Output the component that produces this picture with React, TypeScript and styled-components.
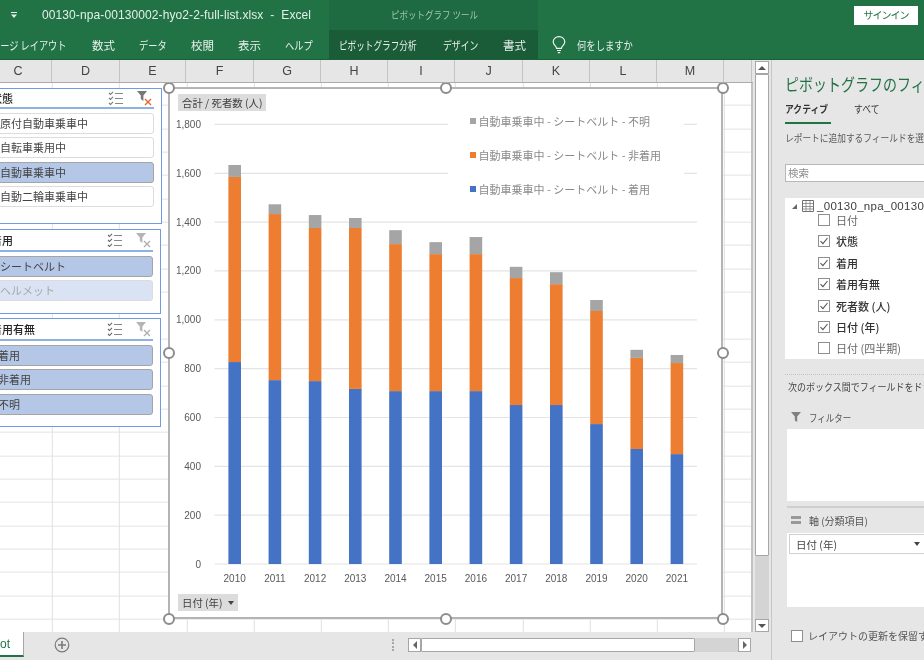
import styled, { createGlobalStyle } from "styled-components";
import { Fragment } from "react";

const GlobalStyle = createGlobalStyle`
  html, body {
    margin: 0;
    padding: 0;
    background: #e6e6e6;
  }
  * {
    box-sizing: border-box;
  }
`;

const FONT = `"Noto Sans CJK JP", "Liberation Sans", sans-serif`;

const Frame = styled.div`
  width: 924px;
  height: 660px;
  overflow: hidden;
  display: flex;
  flex-direction: column;
  font-family: ${FONT};
  background: #e6e6e6;
  filter: blur(0.5px);
`;

// the original UI font is narrow, so the wide CJK glyphs get squeezed
const Squeezed = styled.div<{ $x?: number }>`
  transform: scaleX(${(p) => p.$x ?? 0.77});
  transform-origin: left center;
  white-space: nowrap;
`;

// ---- title bar and ribbon tabs

const TitleBar = styled.div`
  height: 30px;
  flex: none;
  display: flex;
  align-items: center;
  background: #217346;
  color: #e4efe8;
`;

const QuickAccess = styled.div`
  width: 42px;
  padding-left: 10px;
  display: flex;
`;

const FileName = styled.div`
  width: 287px;
  font-family: "Liberation Sans", sans-serif;
  font-size: 12px;
  white-space: pre;
  letter-spacing: 0.1px;
`;

const ContextTitle = styled.div`
  width: 209px;
  height: 100%;
  padding-left: 62px;
  line-height: 30px;
  font-size: 10px;
  color: #a3c4b0;
  background: #1e6b41;
`;

const SignIn = styled.div`
  margin-left: auto;
  margin-right: 6px;
  width: 64px;
  height: 19px;
  line-height: 18px;
  text-align: center;
  font-size: 10px;
  letter-spacing: -1px;
  background: #fff;
  color: #217346;
`;

const RibbonBar = styled.div`
  height: 30px;
  flex: none;
  display: flex;
  align-items: center;
  background: #217346;
  color: #e8f1eb;
  font-size: 11.5px;
  border-bottom: 1px solid #1a6038;
`;

const ContextGroup = styled.div`
  width: 209px;
  height: 100%;
  display: flex;
  align-items: center;
  background: #1b5c38;
`;

const Tab = styled.div<{ $width: number; $pad?: number; $lead?: number }>`
  width: ${(p) => p.$width}px;
  flex: none;
  margin-left: ${(p) => p.$lead ?? 0}px;
  padding-left: ${(p) => p.$pad ?? 0}px;
  white-space: nowrap;
`;

const TellMe = styled.div`
  display: flex;
  align-items: center;
  gap: 11px;
  margin-left: 14px;
`;

// ---- work area

const Main = styled.div`
  flex: 1;
  min-height: 0;
  display: flex;
`;

const Book = styled.div`
  width: 772px;
  flex: none;
  display: flex;
  flex-direction: column;
  border-right: 1px solid #c6c6c6;
`;

const BookTop = styled.div`
  flex: 1;
  min-height: 0;
  display: flex;
`;

const SheetColumn = styled.div`
  width: 753px;
  flex: none;
  display: flex;
  flex-direction: column;
`;

const ColumnHeader = styled.div`
  height: 23px;
  flex: none;
  display: flex;
  margin-left: -15px;
  background: #e6e6e6;
  border-bottom: 1px solid #ababab;
`;

const ColumnCell = styled.div<{ $width: number }>`
  width: ${(p) => p.$width}px;
  flex: none;
  text-align: center;
  line-height: 22px;
  font-family: "Liberation Sans", sans-serif;
  font-size: 12.5px;
  color: #444;
  border-right: 1px solid #c4c4c4;
`;

const Sheet = styled.div`
  position: relative;
  flex: 1;
  overflow: hidden;
  border-right: 2px solid #c2c2c2;
  background-color: #fff;
  background-image: repeating-linear-gradient(
      to right,
      transparent 0,
      transparent 66.2px,
      #e0e0e0 66.2px,
      #e0e0e0 67.2px
    ),
    repeating-linear-gradient(
      to bottom,
      transparent 0,
      transparent 22.35px,
      #e3e3e3 22.35px,
      #e3e3e3 23.35px
    );
  background-position: -14.2px 0, 0 -0.35px;
`;

// ---- slicers

const SlicerBox = styled.div<{ $top: number; $height: number; $right: number }>`
  position: absolute;
  left: -14px;
  top: ${(p) => p.$top}px;
  width: ${(p) => p.$right + 14}px;
  height: ${(p) => p.$height}px;
  background: #fff;
  border: 1px solid #6f9be0;
  padding: 0 7px 0 4px;
`;

const SlicerHead = styled.div<{ $height: number }>`
  height: ${(p) => p.$height}px;
  margin-bottom: 4px;
  display: flex;
  align-items: center;
  border-bottom: 2px solid #8fb0e3;
  font-size: 11px;
  font-weight: 500;
  color: #262626;
`;

const SlicerTitle = styled.div`
  flex: 1;
`;

const SlicerIcons = styled.div`
  display: flex;
  align-items: center;
  gap: 13px;
  margin-right: 1px;
`;

const SlicerItem = styled.div<{ $state: "on" | "off" | "muted"; $pad: number }>`
  height: 21px;
  margin-bottom: 3.4px;
  padding-left: ${(p) => p.$pad}px;
  line-height: 19px;
  font-size: 11px;
  white-space: nowrap;
  border-radius: 3px;
  color: ${(p) => (p.$state === "muted" ? "#a8a8a8" : "#444")};
  border: 1px solid ${(p) => (p.$state === "on" ? "#a5a5a5" : "#dcdcdc")};
  background: ${(p) =>
    p.$state === "on" ? "#b4c7e7" : p.$state === "muted" ? "#dae3f3" : "#fff"};
`;

// ---- chart

const ChartBox = styled.div`
  position: absolute;
  left: 168px;
  top: 4px;
  width: 555px;
  height: 532px;
  background: #fff;
  border: 2px solid #b4b4b4;
`;

const ChartSvg = styled.svg`
  display: block;
  position: absolute;
  left: -2px;
  top: -2px;
`;

const AxisText = styled.text`
  font-family: "Liberation Sans", sans-serif;
  font-size: 10px;
  fill: #595959;
`;

const FieldButton = styled.div<{ $left: number; $top: number }>`
  position: absolute;
  left: ${(p) => p.$left}px;
  top: ${(p) => p.$top}px;
  height: 17px;
  padding: 0 4px;
  display: flex;
  align-items: center;
  gap: 5px;
  line-height: 17px;
  font-size: 10.4px;
  color: #404040;
  white-space: nowrap;
  background: #dcdcdc;
`;

const DownCaret = styled.span`
  width: 0;
  height: 0;
  border-left: 3.5px solid transparent;
  border-right: 3.5px solid transparent;
  border-top: 4px solid #444;
`;

const Legend = styled.div`
  position: absolute;
  left: 278px;
  top: 5px;
  width: 236px;
  height: 112px;
  padding: 17px 0 0 22px;
  display: flex;
  flex-direction: column;
  gap: 14.6px;
  background: #fff;
`;

const LegendRow = styled.div`
  display: flex;
  align-items: center;
  gap: 3px;
  height: 19.4px;
  font-size: 11px;
  color: #8a8a8a;
  white-space: nowrap;
`;

const LegendSwatch = styled.span<{ $color: string }>`
  width: 5.5px;
  height: 6px;
  background: ${(p) => p.$color};
`;

const Handle = styled.span<{ $x: number; $y: number }>`
  position: absolute;
  left: ${(p) => p.$x - 7}px;
  top: ${(p) => p.$y - 7}px;
  width: 12px;
  height: 12px;
  border-radius: 50%;
  background: #fff;
  border: 2px solid #8c8c8c;
`;

// ---- scrollbars

const VScroll = styled.div`
  width: 14px;
  margin-left: 2px;
  flex: none;
  display: flex;
  flex-direction: column;
  padding-top: 1px;
`;

const ScrollButton = styled.div<{ $h?: number; $w?: number }>`
  flex: none;
  height: ${(p) => (p.$h ? `${p.$h}px` : "100%")};
  width: ${(p) => (p.$w ? `${p.$w}px` : "100%")};
  display: flex;
  align-items: center;
  justify-content: center;
  background: #fff;
  border: 1px solid #a6a6a6;
`;

const ScrollThumb = styled.div<{ $h?: number; $w?: number }>`
  flex: none;
  height: ${(p) => (p.$h ? `${p.$h}px` : "100%")};
  width: ${(p) => (p.$w ? `${p.$w}px` : "100%")};
  background: #fff;
  border: 1px solid #a6a6a6;
  border-radius: 1px;
`;

const ScrollTrack = styled.div`
  flex: 1;
  background: #d4d4d4;
`;

const Arrow = styled.span<{ $dir: "up" | "down" | "left" | "right" }>`
  width: 0;
  height: 0;
  border-style: solid;
  border-color: transparent;
  ${(p) =>
    p.$dir === "up"
      ? "border-width: 0 4px 4px; border-bottom-color: #555;"
      : p.$dir === "down"
        ? "border-width: 4px 4px 0; border-top-color: #555;"
        : p.$dir === "left"
          ? "border-width: 4px 4px 4px 0; border-right-color: #666;"
          : "border-width: 4px 0 4px 4px; border-left-color: #666;"}
`;

// ---- sheet tabs

const SheetTabs = styled.div`
  height: 25px;
  margin-bottom: 3px;
  flex: none;
  display: flex;
  align-items: center;
  background: #e6e6e6;
`;

const ActiveSheet = styled.div`
  width: 24px;
  height: 100%;
  text-align: right;
  padding-right: 13px;
  line-height: 24px;
  font-family: "Liberation Sans", sans-serif;
  font-size: 12px;
  color: #217346;
  background: #fff;
  border-right: 1px solid #a6a6a6;
  border-bottom: 2px solid #217346;
`;

const AddSheet = styled.div`
  margin-left: 30px;
  width: 16px;
  height: 16px;
  display: flex;
`;

const TabDots = styled.div`
  margin-left: 322px;
  width: 3px;
  height: 12px;
  border-left: 2px dotted #a6a6a6;
`;

const HScroll = styled.div`
  margin-left: 13px;
  width: 343px;
  height: 14px;
  display: flex;
`;

// ---- field pane

const Pane = styled.div`
  flex: 1;
  min-width: 0;
  padding: 11px 0 0 13px;
  overflow: hidden;
  display: flex;
  flex-direction: column;
  white-space: nowrap;
`;

const PaneTitle = styled.div`
  height: 26px;
  line-height: 26px;
  font-size: 17.5px;
  color: #217346;
`;

const PaneTabs = styled.div`
  margin-top: 3px;
  height: 24px;
  display: flex;
  font-size: 10px;
  color: #333;
`;

const PaneTab = styled.div<{ $active?: boolean }>`
  width: ${(p) => (p.$active ? "46px" : "auto")};
  margin-right: ${(p) => (p.$active ? 23 : 0)}px;
  font-weight: ${(p) => (p.$active ? 700 : 400)};
  line-height: 18px;
  border-bottom: ${(p) => (p.$active ? "2px solid #217346" : "none")};
`;

const PaneNote = styled.div`
  margin-top: 6px;
  height: 16px;
  line-height: 16px;
  font-size: 10px;
  color: #595959;
`;

const SearchBox = styled.div`
  margin-top: 18px;
  height: 18px;
  padding-left: 2px;
  width: 200px;
  line-height: 15px;
  font-size: 10.5px;
  color: #8c8c8c;
  background: #fff;
  border: 1px solid #b8b8b8;
`;

const FieldList = styled.div`
  margin-top: 16px;
  width: 200px;
  height: 161px;
  padding: 1px 0 0 7px;
  background: #fff;
`;

const TableRow = styled.div`
  height: 14px;
  margin-bottom: -3.7px;
  display: flex;
  align-items: center;
  gap: 3px;
  font-family: "Liberation Sans", sans-serif;
  font-size: 11.5px;
  font-weight: 500;
  color: #404040;
  letter-spacing: 0.3px;
`;

const TreeCaret = styled.span`
  width: 0;
  height: 0;
  margin-right: 2px;
  border-left: 5px solid transparent;
  border-bottom: 5px solid #666;
`;

const FieldRow = styled.div<{ $on?: boolean }>`
  height: 21.4px;
  padding-left: 26px;
  display: flex;
  align-items: center;
  gap: 6px;
  font-size: 11px;
  font-weight: ${(p) => (p.$on ? 500 : 400)};
  color: ${(p) => (p.$on ? "#333" : "#666")};
`;

const CheckBox = styled.span`
  width: 12px;
  height: 12px;
  flex: none;
  display: flex;
  background: #fff;
  border: 1px solid #8f8f8f;
`;

const DottedRule = styled.div`
  margin-top: 15px;
  border-top: 1px dotted #c4c4c4;
`;

const DropNote = styled.div`
  margin: 4px 0 0 3px;
  height: 16px;
  line-height: 16px;
  font-size: 10px;
  color: #444;
`;

const AreaLabel = styled.div<{ $gap: number }>`
  margin: ${(p) => p.$gap}px 0 0 6px;
  height: 16px;
  display: flex;
  align-items: center;
  gap: 8px;
  font-size: 10px;
  color: #555;
`;

const AreaBox = styled.div<{ $height: number; $gap: number }>`
  margin: ${(p) => p.$gap}px 0 0 2px;
  width: 200px;
  height: ${(p) => p.$height}px;
  padding-top: 1px;
  background: #fff;
`;

const AreaField = styled.div`
  margin-left: 2px;
  height: 20px;
  padding-left: 6px;
  display: flex;
  align-items: center;
  width: 135px;
  justify-content: space-between;
  padding-right: 4px;
  font-size: 10.5px;
  color: #444;
  background: #fff;
  border: 1px solid #d0d0d0;
  border-right: none;
`;

const DeferRow = styled.div`
  margin: 21px 0 0 6px;
  display: flex;
  align-items: center;
  gap: 5px;
  font-size: 10px;
  color: #555;
`;

const AreaRule = styled.div`
  margin: 5px 0 0 2px;
  border-top: 2px solid #cfcfcf;
`;

// ---- icons

const MultiSelectIcon = ({ muted }: { muted?: boolean }) => (
  <svg width="16" height="14" viewBox="0 0 16 14" fill="none">
    <path
      d="M1 2l1.5 1.5L5 .8M1 7l1.5 1.5L5 5.8M1 12l1.5 1.5L5 10.8"
      stroke={muted ? "#666" : "#777"}
      strokeWidth="1.1"
    />
    <path d="M7 2.5h8M7 7.5h8M7 12.5h8" stroke="#888" strokeWidth="1.2" />
  </svg>
);

const ClearFilterIcon = ({ active }: { active?: boolean }) => (
  <svg width="16" height="15" viewBox="0 0 16 15" fill="none">
    <path d="M0 0h10L6.4 4.4V10L3.8 8V4.4z" fill={active ? "#777" : "#b5b5b5"} />
    <path
      d="M8 8l6 6M14 8l-6 6"
      stroke={active ? "#e2672a" : "#b0b0b0"}
      strokeWidth="1.4"
    />
  </svg>
);

const LightBulb = () => (
  <svg width="14" height="18" viewBox="0 0 14 18" fill="none" stroke="#f0f5f1" strokeWidth="1.2">
    <path d="M4.6 12.4C4.4 10 1.2 9 1.2 5.8a5.8 5.2 0 0 1 11.6 0c0 3.2-3.2 4.2-3.4 6.6z" />
    <path d="M5 14.5h4M5.8 16.6h2.4" />
  </svg>
);

const TableIcon = () => (
  <svg width="12" height="12" viewBox="0 0 12 12" fill="none" stroke="#707070" strokeWidth="1">
    <path d="M.5.5h11v11H.5z" />
    <path d="M.5 3.5h11M.5 6.5h11M.5 9h11M4 .5v11M8 .5v11" strokeWidth=".7" />
  </svg>
);

const Tick = () => (
  <svg width="10" height="10" viewBox="0 0 10 10" fill="none">
    <path d="M1.5 5.2l2.4 2.4 4.6-5.6" stroke="#555" strokeWidth="1.1" />
  </svg>
);

const PlusCircle = () => (
  <svg width="16" height="16" viewBox="0 0 16 16" fill="none" stroke="#7b7b7b">
    <circle cx="8" cy="8" r="6.8" strokeWidth="1.2" />
    <path d="M8 4v8M4 8h8" strokeWidth="1.6" />
  </svg>
);

const QuickAccessIcon = () => (
  <svg width="8" height="8" viewBox="0 0 8 8" fill="#e4efe8">
    <path d="M1 1h6v1H1zM1 3.5h6L4 7z" />
  </svg>
);

const FunnelIcon = () => (
  <svg width="10" height="10" viewBox="0 0 10 10" fill="#808080">
    <path d="M0 0h10L6.2 4.6V10L3.8 8.4V4.6z" />
  </svg>
);

const AxisIcon = () => (
  <svg width="10" height="8" viewBox="0 0 10 8" fill="#999">
    <path d="M0 0h10v3H0zM0 5h10v3H0z" />
  </svg>
);

// ---- data

const columns = [
  { label: "C", width: 67 },
  { label: "D", width: 68 },
  { label: "E", width: 66 },
  { label: "F", width: 68 },
  { label: "G", width: 67 },
  { label: "H", width: 67 },
  { label: "I", width: 67 },
  { label: "J", width: 68 },
  { label: "K", width: 67 },
  { label: "L", width: 67 },
  { label: "M", width: 67 },
  { label: "", width: 28 },
];

// seat belt worn, not worn, unknown per year
const chartData = [
  { year: 2010, worn: 827, notWorn: 758, unknown: 49 },
  { year: 2011, worn: 753, notWorn: 680, unknown: 40 },
  { year: 2012, worn: 749, notWorn: 627, unknown: 53 },
  { year: 2013, worn: 717, notWorn: 659, unknown: 41 },
  { year: 2014, worn: 708, notWorn: 602, unknown: 57 },
  { year: 2015, worn: 708, notWorn: 561, unknown: 49 },
  { year: 2016, worn: 708, notWorn: 561, unknown: 70 },
  { year: 2017, worn: 651, notWorn: 520, unknown: 46 },
  { year: 2018, worn: 651, notWorn: 495, unknown: 49 },
  { year: 2019, worn: 573, notWorn: 463, unknown: 45 },
  { year: 2020, worn: 471, notWorn: 373, unknown: 33 },
  { year: 2021, worn: 450, notWorn: 373, unknown: 33 },
];

const BLUE = "#4472c4";
const ORANGE = "#ed7d31";
const GRAY = "#a5a5a5";

const BASE_Y = 477; // y of zero in chart coordinates
const SCALE = 0.2442;
const ticks = [0, 200, 400, 600, 800, 1000, 1200, 1400, 1600, 1800];

const legendRows = [
  { color: GRAY, text: "自動車乗車中 - シートベルト - 不明" },
  { color: ORANGE, text: "自動車乗車中 - シートベルト - 非着用" },
  { color: BLUE, text: "自動車乗車中 - シートベルト - 着用" },
];

const handles = [
  [0, 0],
  [277, 0],
  [554, 0],
  [0, 265],
  [554, 265],
  [0, 531],
  [277, 531],
  [554, 531],
];

const fields = [
  { name: "日付", on: false },
  { name: "状態", on: true },
  { name: "着用", on: true },
  { name: "着用有無", on: true },
  { name: "死者数 (人)", on: true },
  { name: "日付 (年)", on: true },
  { name: "日付 (四半期)", on: false },
];

const PivotChart = () => (
  <ChartSvg width="555" height="532" viewBox="0 0 555 532">
    {ticks.map((t) => {
      const y = BASE_Y - t * SCALE;
      return (
        <Fragment key={t}>
          <line x1="46.5" x2="529" y1={y} y2={y} stroke="#e4e4e4" strokeWidth="1.2" />
          <AxisText x="33" y={y + 3.5} textAnchor="end">
            {t.toLocaleString("en-US")}
          </AxisText>
        </Fragment>
      );
    })}
    {chartData.map((d, i) => {
      const x = 60.4 + i * 40.2;
      const blueH = d.worn * SCALE;
      const orangeH = d.notWorn * SCALE;
      const grayH = d.unknown * SCALE;
      return (
        <Fragment key={d.year}>
          <rect x={x} y={BASE_Y - blueH} width="12.6" height={blueH} fill={BLUE} />
          <rect x={x} y={BASE_Y - blueH - orangeH} width="12.6" height={orangeH} fill={ORANGE} />
          <rect
            x={x}
            y={BASE_Y - blueH - orangeH - grayH}
            width="12.6"
            height={grayH}
            fill={GRAY}
          />
          <AxisText x={x + 6.3} y={495} textAnchor="middle">
            {d.year}
          </AxisText>
        </Fragment>
      );
    })}
  </ChartSvg>
);

const App = () => {
  return (
    <>
      <GlobalStyle />
      <Frame>
        <TitleBar>
          <QuickAccess>
            <QuickAccessIcon />
          </QuickAccess>
          <FileName>00130-npa-00130002-hyo2-2-full-list.xlsx  -  Excel</FileName>
          <ContextTitle>
            <Squeezed $x={0.85}>ピボットグラフ ツール</Squeezed>
          </ContextTitle>
          <SignIn>サインイン</SignIn>
        </TitleBar>
        <RibbonBar>
          <Tab $width={101} $lead={-9}>
            <Squeezed $x={0.8}>ページ レイアウト</Squeezed>
          </Tab>
          <Tab $width={47}>数式</Tab>
          <Tab $width={52}>
            <Squeezed $x={0.8}>データ</Squeezed>
          </Tab>
          <Tab $width={47}>校閲</Tab>
          <Tab $width={47}>表示</Tab>
          <Tab $width={44}>
            <Squeezed $x={0.8}>ヘルプ</Squeezed>
          </Tab>
          <ContextGroup>
            <Tab $width={114} $pad={10}>
              <Squeezed $x={0.75}>ピボットグラフ分析</Squeezed>
            </Tab>
            <Tab $width={60}>
              <Squeezed>デザイン</Squeezed>
            </Tab>
            <Tab $width={30}>書式</Tab>
          </ContextGroup>
          <TellMe>
            <LightBulb />
            <Squeezed $x={0.81}>何をしますか</Squeezed>
          </TellMe>
        </RibbonBar>
        <Main>
          <Book>
            <BookTop>
              <SheetColumn>
                <ColumnHeader>
                  {columns.map((c, i) => (
                    <ColumnCell key={i} $width={c.width}>
                      {c.label}
                    </ColumnCell>
                  ))}
                </ColumnHeader>
                <Sheet>
                  <SlicerBox $top={5} $height={136} $right={162}>
                    <SlicerHead $height={20}>
                      <SlicerTitle>状態</SlicerTitle>
                      <SlicerIcons>
                        <MultiSelectIcon />
                        <ClearFilterIcon active />
                      </SlicerIcons>
                    </SlicerHead>
                    <SlicerItem $pad={8} $state="off">原付自動車乗車中</SlicerItem>
                    <SlicerItem $pad={8} $state="off">自転車乗用中</SlicerItem>
                    <SlicerItem $pad={8} $state="on">自動車乗車中</SlicerItem>
                    <SlicerItem $pad={8} $state="off">自動二輪車乗車中</SlicerItem>
                  </SlicerBox>
                  <SlicerBox $top={146} $height={85} $right={161}>
                    <SlicerHead $height={22}>
                      <SlicerTitle>着用</SlicerTitle>
                      <SlicerIcons>
                        <MultiSelectIcon muted />
                        <ClearFilterIcon />
                      </SlicerIcons>
                    </SlicerHead>
                    <SlicerItem $pad={8} $state="on">シートベルト</SlicerItem>
                    <SlicerItem $pad={8} $state="muted">ヘルメット</SlicerItem>
                  </SlicerBox>
                  <SlicerBox $top={235} $height={109} $right={161}>
                    <SlicerHead $height={22}>
                      <SlicerTitle>着用有無</SlicerTitle>
                      <SlicerIcons>
                        <MultiSelectIcon muted />
                        <ClearFilterIcon />
                      </SlicerIcons>
                    </SlicerHead>
                    <SlicerItem $pad={6} $state="on">着用</SlicerItem>
                    <SlicerItem $pad={6} $state="on">非着用</SlicerItem>
                    <SlicerItem $pad={6} $state="on">不明</SlicerItem>
                  </SlicerBox>
                  <ChartBox>
                    <PivotChart />
                    <FieldButton $left={8} $top={5}>
                      合計 / 死者数 (人)
                    </FieldButton>
                    <FieldButton $left={8} $top={505}>
                      日付 (年)
                      <DownCaret />
                    </FieldButton>
                    <Legend>
                      {legendRows.map((r) => (
                        <LegendRow key={r.text}>
                          <LegendSwatch $color={r.color} />
                          {r.text}
                        </LegendRow>
                      ))}
                    </Legend>
                    {handles.map(([x, y]) => (
                      <Handle key={`${x}-${y}`} $x={x} $y={y} />
                    ))}
                  </ChartBox>
                </Sheet>
              </SheetColumn>
              <VScroll>
                <ScrollButton $h={13}>
                  <Arrow $dir="up" />
                </ScrollButton>
                <ScrollThumb $h={482} />
                <ScrollTrack />
                <ScrollButton $h={13}>
                  <Arrow $dir="down" />
                </ScrollButton>
              </VScroll>
            </BookTop>
            <SheetTabs>
              <ActiveSheet>ot</ActiveSheet>
              <AddSheet>
                <PlusCircle />
              </AddSheet>
              <TabDots />
              <HScroll>
                <ScrollButton $w={13}>
                  <Arrow $dir="left" />
                </ScrollButton>
                <ScrollThumb $w={274} />
                <ScrollTrack />
                <ScrollButton $w={13}>
                  <Arrow $dir="right" />
                </ScrollButton>
              </HScroll>
            </SheetTabs>
          </Book>
          <Pane>
            <PaneTitle>
              <Squeezed $x={0.8}>ピボットグラフのフィールド</Squeezed>
            </PaneTitle>
            <PaneTabs>
              <PaneTab $active>
                <Squeezed $x={0.88}>アクティブ</Squeezed>
              </PaneTab>
              <PaneTab>
                <Squeezed $x={0.88}>すべて</Squeezed>
              </PaneTab>
            </PaneTabs>
            <PaneNote>
              <Squeezed $x={0.87}>レポートに追加するフィールドを選択してください:</Squeezed>
            </PaneNote>
            <SearchBox>検索</SearchBox>
            <FieldList>
              <TableRow>
                <TreeCaret />
                <TableIcon />
                _00130_npa_00130002
              </TableRow>
              {fields.map((f) => (
                <FieldRow key={f.name} $on={f.on}>
                  <CheckBox>{f.on && <Tick />}</CheckBox>
                  {f.name}
                </FieldRow>
              ))}
            </FieldList>
            <DottedRule />
            <DropNote>
              <Squeezed $x={0.9}>次のボックス間でフィールドをドラッグしてください:</Squeezed>
            </DropNote>
            <AreaLabel $gap={14}>
              <FunnelIcon />
              <Squeezed $x={0.85}>フィルター</Squeezed>
            </AreaLabel>
            <AreaBox $height={72} $gap={4} />
            <AreaRule />
            <AreaLabel $gap={4}>
              <AxisIcon />
              軸 (分類項目)
            </AreaLabel>
            <AreaBox $height={74} $gap={5}>
              <AreaField>
                日付 (年)
                <DownCaret />
              </AreaField>
            </AreaBox>
            <DeferRow>
              <CheckBox />
              レイアウトの更新を保留する
            </DeferRow>
          </Pane>
        </Main>
      </Frame>
    </>
  );
};

export default App;
